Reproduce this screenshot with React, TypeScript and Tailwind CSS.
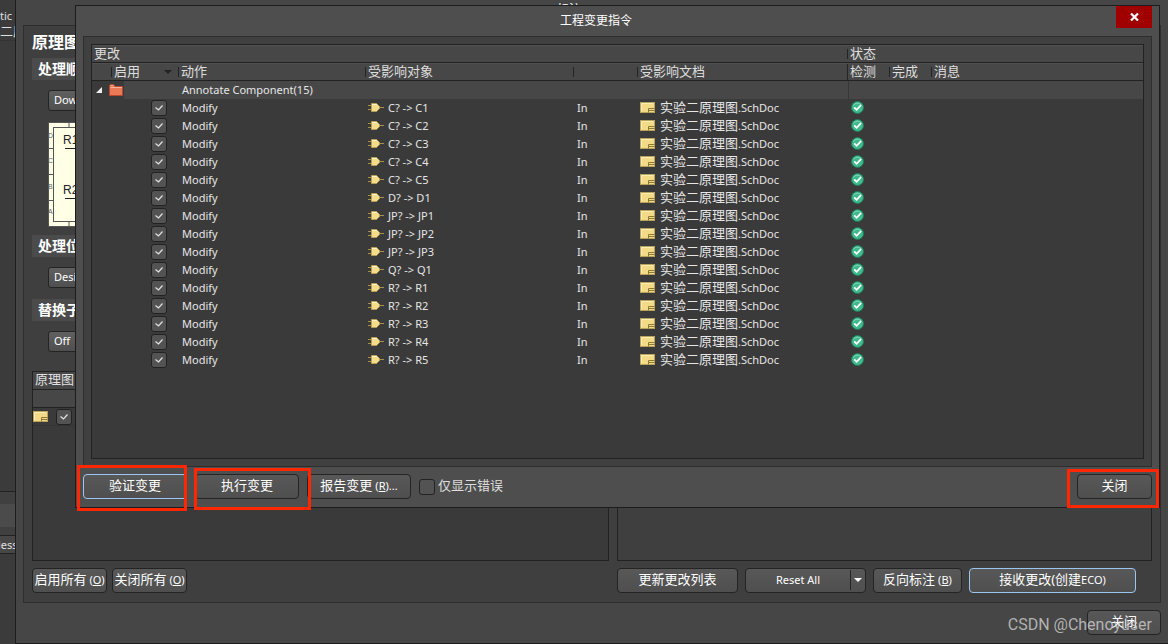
import type { ReactNode } from "react";

const changes = [
  "C? -> C1", "C? -> C2", "C? -> C3", "C? -> C4", "C? -> C5",
  "D? -> D1", "JP? -> JP1", "JP? -> JP2", "JP? -> JP3", "Q? -> Q1",
  "R? -> R1", "R? -> R2", "R? -> R3", "R? -> R4", "R? -> R5",
];

function PartIcon() {
  return (
    <svg width="16" height="11" viewBox="0 0 16 11" className="shrink-0">
      <path d="M0 3.5H4M0 7.5H4M11 5.5H16" stroke="#a8904a" />
      <path d="M3.5 1.5H8.5L11.5 4.5V6.5L8.5 9.5H3.5Z" fill="#f3dc8c" stroke="#b79f55" />
      <path d="M4 2.5H8.5L9.5 3.5" stroke="#fff3c8" fill="none" />
    </svg>
  );
}

function SheetIcon() {
  return (
    <svg width="15" height="11" viewBox="0 0 15 11" className="shrink-0">
      <rect x=".5" y=".5" width="14" height="10" fill="#f3da86" stroke="#b8a25c" />
      <path d="M1.5 9V1.5H13" stroke="#fbedb8" fill="none" />
      <path d="M8.5 10.5V6.5H14.5M8.5 8.5H14.5" stroke="#8d7838" fill="none" />
    </svg>
  );
}

function PassIcon() {
  return (
    <svg width="13" height="13" viewBox="0 0 13 13" className="shrink-0">
      <circle cx="6.5" cy="6.5" r="6" fill="#3fb98d" stroke="#1f7d5c" />
      <path d="M2.5 4.5A4.5 4.5 0 0 1 10.5 4.5" stroke="#7fdcb9" fill="none" />
      <path d="M3.2 6.4L5.6 8.8L10 4.2" stroke="#fff" strokeWidth="1.8" fill="none" />
    </svg>
  );
}

function FolderIcon() {
  return (
    <svg width="14" height="12" viewBox="0 0 14 12" className="shrink-0">
      <path d="M.5 11.5V1.5L1.5 .5H4.5L6 2.5H13.5V11.5Z" fill="#ea7a56" stroke="#b8472b" />
      <path d="M1.5 3.5H13" stroke="#f7b49c" />
      <path d="M1.5 1.5H4.5" stroke="#f3a084" />
    </svg>
  );
}

function Check({ label, checked = true }: { label: string; checked?: boolean }) {
  return (
    <span className="inline-grid h-4 w-4 shrink-0">
      <input
        type="checkbox"
        aria-label={label}
        defaultChecked={checked}
        className="peer col-start-1 row-start-1 h-4 w-4 appearance-none rounded-[3px] border border-[#222222] bg-[#535353]"
      />
      <svg
        viewBox="0 0 16 16"
        className="pointer-events-none invisible col-start-1 row-start-1 h-4 w-4 peer-checked:visible"
      >
        <path d="M4.5 7.5L7.5 10L11.5 5.5" stroke="#e4e4e4" strokeWidth="1.2" fill="none" />
      </svg>
    </span>
  );
}

function Button({ children, className = "", primary = false }: { children: ReactNode; className?: string; primary?: boolean }) {
  return (
    <button
      type="button"
      className={`flex h-[25px] shrink-0 items-center justify-center rounded-[4px] border bg-linear-to-b from-[#585858] to-[#4f4f4f] pb-px text-[13px] whitespace-nowrap text-white ${
        primary ? "border-[#9cc6f0]" : "border-[#242424]"
      } ${className}`}
    >
      {children}
    </button>
  );
}

function Key({ letter, after = "" }: { letter: string; after?: string }) {
  return (
    <span className="ml-[3px] text-[11px]">
      (<u>{letter}</u>){after}
    </span>
  );
}

function Highlight({ children, box }: { children: ReactNode; box: string }) {
  return (
    <div className="relative shrink-0">
      {children}
      <span className={`pointer-events-none absolute border-3 border-[#ff2600] ${box}`} />
    </div>
  );
}

function Head({ children, line = "short", sort = false }: { children?: ReactNode; line?: "short" | "full" | "none"; sort?: boolean }) {
  return (
    <div className="flex h-[18px] items-center border-t border-b border-t-[#505050] border-b-[#222222] bg-[#474747] pl-[2px]">
      <span className="flex-1 pb-[2px] leading-[14px] whitespace-nowrap">{children}</span>
      {sort && (
        <svg width="8" height="4" viewBox="0 0 8 4" className="mr-[6px]">
          <path d="M0 0H8L4 4Z" fill="#222222" />
        </svg>
      )}
      {line !== "none" && <span className={`w-px bg-[#242424] ${line === "full" ? "h-4" : "h-[10px]"}`} />}
    </div>
  );
}

function SectionTitle({ children }: { children: ReactNode }) {
  return <h2 className="flex h-[22px] items-center bg-[#4b4b4b] pb-[2px] pl-[6px] text-[14px] font-bold text-white">{children}</h2>;
}

function Picker({ value, label }: { value: string; label: string }) {
  return (
    <select
      aria-label={label}
      className="ml-4 block h-[21px] w-40 appearance-none rounded-[3px] border border-[#242424] bg-linear-to-b from-[#606060] to-[#4f4f4f] pl-[5px] text-[11px] text-white"
    >
      <option>{value}</option>
    </select>
  );
}

function OrderPreview() {
  return (
    <svg width="160" height="105" viewBox="0 0 160 105" className="ml-4 block" fontFamily="Liberation Sans, sans-serif">
      <rect x=".5" y=".5" width="159" height="104" fill="#ffffe6" stroke="#555555" />
      <rect x="5.5" y="5.5" width="149" height="94" fill="#ffffe6" stroke="#555555" />
      <path d="M1 26.500H5M1 52.500H5M1 78.500H5M21 1V5M21 100V104" stroke="#555555" />
      <g fontSize="7" fill="#666666">
        <text x="0" y="16">D</text>
        <text x="0" y="41">C</text>
        <text x="0" y="67">B</text>
        <text x="0" y="92">A</text>
      </g>
      <g fontSize="12" fill="#222222">
        <text x="15" y="22">R1</text>
        <text x="15" y="72">R2</text>
      </g>
      <path d="M17 26.500H40M17 76.500H40" stroke="#222222" />
    </svg>
  );
}

function AnnotateDialog() {
  return (
    <section className="flex min-w-0 flex-1 flex-col border-b border-l border-[#1d1d1d] bg-[#464646]">
      <header className="flex h-[25px] items-start overflow-hidden pt-[1px] text-[12px] text-white">
        <h1 className="flex-1 pr-4 text-center leading-[18px]">标注</h1>
        <button type="button" aria-label="关闭标注" className="mr-5 h-5 w-[10px] pl-[1px]">
          <svg width="9" height="9" viewBox="0 0 9 9">
            <path d="M1 1L8 8M8 1L1 8" stroke="#fff" strokeWidth="2" />
          </svg>
        </button>
      </header>

      <div className="mx-[7px] flex flex-1 flex-col border border-[#2e2e2e] bg-[#3f3f3f] px-2 pb-[9px]">
        <div className="grid flex-1 grid-cols-[577fr_535fr] gap-2">
          <div className="flex flex-col">
            <h2 className="h-8 text-[16px] leading-8 font-bold text-white">原理图</h2>
            <SectionTitle>处理顺序</SectionTitle>
            <div className="pt-[10px] pb-[11px]"><Picker label="处理顺序" value="Down" /></div>
            <OrderPreview />
            <div className="h-2" />
            <SectionTitle>处理位置</SectionTitle>
            <div className="pt-[10px] pb-[11px]"><Picker label="处理位置" value="Desi" /></div>
            <SectionTitle>替换子件</SectionTitle>
            <div className="pt-[10px] pb-[19px]"><Picker label="替换子件" value="Off" /></div>
            <div className="h-[190px] border border-[#222222] bg-[#3a3a3a]">
              <div className="h-[18px] border-b border-[#222222] bg-[#474747] pl-[2px] text-[13px] leading-[14px] text-[#e0e0e0]">原理图</div>
              <div className="h-[18px] border-b border-[#222222] bg-[#474747]" />
              <div className="flex h-[18px] items-center gap-2 border-b border-[#333333]">
                <SheetIcon />
                <Check label="原理图" />
              </div>
            </div>
          </div>
          <div className="border border-[#222222] bg-[#3f3f3f]" />
        </div>
        <div className="grid grid-cols-[577fr_535fr] gap-2 pt-[7px]">
          <div className="flex gap-[5px]">
            <Button className="w-[75px]">启用所有<Key letter="O" /></Button>
            <Button className="w-[75px]">关闭所有<Key letter="O" /></Button>
          </div>
          <div className="flex gap-[7px]">
            <Button className="w-[121px]">更新更改列表</Button>
            <Button className="w-[121px]">
              <span className="flex-1 text-[11px]">Reset All</span>
              <span className="h-5 w-px bg-[#242424]" />
              <span className="flex w-[14px] justify-center">
                <svg width="8" height="4" viewBox="0 0 8 4"><path d="M0 0H8L4 4Z" fill="#fff" /></svg>
              </span>
            </Button>
            <Button className="w-[89px]">反向标注<Key letter="B" /></Button>
            <Button primary className="w-[167px]">
              接收更改(创建<span className="text-[11px]">ECO)</span>
            </Button>
          </div>
        </div>
      </div>

      <footer className="flex h-10 justify-end pt-[7px] pr-[7px]">
        <div className="relative">
          <Button className="w-[74px]">关闭</Button>
          <span className="pointer-events-none absolute top-[3px] right-[9px] font-[Roboto,sans-serif] text-[16px] leading-6 whitespace-nowrap text-[#d8d8d8]/75">
            CSDN @Chenoyuser
          </span>
        </div>
      </footer>
    </section>
  );
}

function ChangeTable() {
  return (
    <table className="w-full table-fixed border-separate border-spacing-0 text-left text-[11px] text-[#e6e6e6]">
      <colgroup>
        <col className="w-5" />
        <col className="w-[67px]" />
        <col className="w-[187px]" />
        <col className="w-[208px]" />
        <col className="w-16" />
        <col className="w-[210px]" />
        <col className="w-[42px]" />
        <col className="w-[42px]" />
        <col />
      </colgroup>
      <thead className="text-[13px] text-[#dedede] [&_th]:p-0 [&_th]:font-normal">
        <tr>
          <th colSpan={6}><Head>更改</Head></th>
          <th colSpan={3}><Head line="none">状态</Head></th>
        </tr>
        <tr>
          <th><Head /></th>
          <th><Head sort>启用</Head></th>
          <th><Head>动作</Head></th>
          <th><Head>受影响对象</Head></th>
          <th><Head /></th>
          <th><Head line="full">受影响文档</Head></th>
          <th><Head>检测</Head></th>
          <th><Head>完成</Head></th>
          <th><Head line="none">消息</Head></th>
        </tr>
      </thead>
      <tbody className="leading-4 whitespace-nowrap [&_td]:h-[18px] [&_td]:p-0">
        <tr>
          <td colSpan={2}>
            <div className="flex h-[18px]">
              <div className="flex w-8 items-center gap-[7px] pl-1">
                <svg width="6" height="6" viewBox="0 0 6 6"><path d="M6 0V6H0Z" fill="#f0f0f0" /></svg>
                <FolderIcon />
              </div>
              <div className="flex-1 bg-[#474747]" />
            </div>
          </td>
          <td colSpan={4} className="bg-[#474747]"><div className="pl-[3px]">Annotate Component(15)</div></td>
          <td colSpan={3} className="border-l border-[#383838] bg-[#474747]" />
        </tr>
        {changes.map((change) => (
          <tr key={change}>
            <td />
            <td><div className="flex pl-[39px]"><Check label={change} /></div></td>
            <td><div className="pl-[3px]">Modify</div></td>
            <td>
              <div className="flex h-4 items-center gap-1 pl-[2px]">
                <span className="pb-[2px]"><PartIcon /></span>
                {change}
              </div>
            </td>
            <td><div className="pl-[3px]">In</div></td>
            <td>
              <div className="flex h-4 items-center gap-[5px] pb-[2px] pl-[2px]">
                <SheetIcon />
                <span><span className="text-[13px]">实验二原理图</span>.SchDoc</span>
              </div>
            </td>
            <td><div className="flex h-4 items-center pb-[2px] pl-[3px]"><PassIcon /></div></td>
            <td />
            <td />
          </tr>
        ))}
      </tbody>
    </table>
  );
}

function ChangeOrderDialog() {
  return (
    <section className="absolute top-[5px] right-2 left-[75px] border border-[#1c1c1c] bg-[#4e4e4e]">
      <header className="flex h-[30px] items-start pr-[7px]">
        <h1 className="flex-1 text-center text-[12px] leading-[30px] text-white">工程变更指令</h1>
        <button type="button" aria-label="关闭窗口" className="flex h-[22px] w-9 items-center justify-center bg-[#a00000]">
          <svg width="9" height="8" viewBox="0 0 9 8">
            <path d="M1 .5L8 7.500M8 .5L1 7.500" stroke="#fff" strokeWidth="2.200" />
          </svg>
        </button>
      </header>
      <div className="mx-[7px] border border-[#2e2e2e] bg-[#404040] p-[7px]">
        <div className="min-h-[415px] border border-[#222222] bg-[#3a3a3a]">
          <ChangeTable />
        </div>
      </div>
      <footer className="flex h-10 items-start gap-2 px-[7px] pt-[7px]">
        <Highlight box="-top-[9px] right-0 -bottom-3 -left-[6px]">
          <Button primary className="w-[104px]">验证变更</Button>
        </Highlight>
        <Highlight box="-top-[6px] -right-3 -bottom-[11px] -left-px">
          <Button className="w-[104px]">执行变更</Button>
        </Highlight>
        <Button className="w-[104px]">报告变更<Key letter="R" after="..." /></Button>
        <label className="flex h-[25px] flex-1 items-center gap-[3px] text-[13px] text-[#dedede]">
          <Check label="仅显示错误" checked={false} />
          <span className="pb-px">仅显示错误</span>
        </label>
        <Highlight box="-top-[5px] -right-[7px] -bottom-[9px] -left-[10px]">
          <Button className="w-[75px]">关闭</Button>
        </Highlight>
      </footer>
    </section>
  );
}

export default function App() {
  return (
    <main className="relative flex min-h-screen overflow-hidden bg-[#3b3b3b] font-['Noto_Sans','Noto_Sans_CJK_SC',sans-serif]">
      <aside className="flex w-[15px] shrink-0 flex-col overflow-hidden text-[11px] whitespace-nowrap text-[#e0e0e0]">
        <div className="flex h-6 items-end leading-4">tic D</div>
        <div className="h-[17px] border-b border-[#333333] text-[13px] leading-[14px]">二原</div>
        <div className="flex-1" />
        <div className="h-[45px] border-y border-[#222222] bg-[#404040] py-3">
          <div className="h-[23px] bg-[#4b4b4b]" />
        </div>
        <div className="h-[18px] border-b border-[#222222] bg-[#474747] leading-[18px]">
          <span className="-ml-[2px] text-[#d0704c]">l</span>ess
        </div>
        <div className="h-[90px]" />
      </aside>
      <AnnotateDialog />
      <ChangeOrderDialog />
    </main>
  );
}
